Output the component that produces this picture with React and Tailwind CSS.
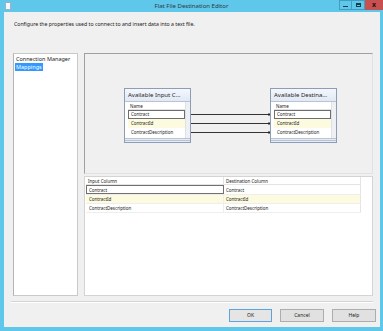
import React from "react";

const font = { fontFamily: '"Noto Sans", "Liberation Sans", sans-serif' };

function Node({ title, pos }) {
  return (
    <div className={`absolute top-[34px] ${pos} w-[67px] h-[55px] border border-[#8d9db5] bg-[#e6ecf5] flex flex-col`}>
      <div className="h-[13px] bg-gradient-to-b from-[#f4f7fc] to-[#e2e9f5] border-b border-[#b8c3d4] px-[3px] text-[6px] leading-[13px] text-[#1e1e1e] whitespace-nowrap overflow-hidden">
        {title}
      </div>
      <div className="flex pl-[3px] bg-white">
        <div className="w-[57px] h-[36px] flex flex-col bg-white">
          <div className="h-[8px] border-b border-[#e2e2e2] pl-[2px] text-[4.5px] leading-[8px] text-[#222]">Name</div>
          <div className="h-[9px] border border-[#6e6e6e] pl-[2px] text-[4.5px] leading-[7px] text-[#222]">Contract</div>
          <div className="h-[9px] bg-[#fdfbdf] pl-[3px] text-[4.5px] leading-[9px] text-[#222]">ContractId</div>
          <div className="h-[9px] pl-[3px] text-[4.5px] leading-[9px] text-[#222]">ContractDescription</div>
        </div>
        <div className="flex-1 bg-[#eef0f4] border-l border-[#dde1e8]" />
      </div>
      <div className="flex-1 border-t border-[#b8c3d4] bg-[#e6ecf5] flex flex-col justify-end">
        <div className="h-[2px] border-t border-[#b8c3d4]" />
      </div>
    </div>
  );
}

export default function App() {
  return (
    <div className="w-[383px] h-[331px] bg-[#5fc7ea] flex flex-col overflow-hidden" style={font}>
      {/* title bar */}
      <div className="h-[12px] flex items-start relative">
        <div className="absolute left-[5px] top-[2px] w-[6px] h-[8px] bg-[#f4f8fc] border border-[#9fb3c8]" />
        <div className="flex-1 text-center text-[6px] leading-[12px] text-[#2a3a44]">Flat File Destination Editor</div>
        <div className="absolute right-0 top-0 flex">
          <div className="w-[13px] h-[10px] border border-[#3f9ec2] bg-[#5fc7ea] flex items-center justify-center">
            <div className="w-[5px] h-[1px] bg-[#1c3a48] mt-[2px]" />
          </div>
          <div className="w-[13px] h-[10px] border border-l-0 border-[#3f9ec2] bg-[#5fc7ea] flex items-center justify-center">
            <div className="w-[5px] h-[4px] border border-t-2 border-[#1c3a48]" />
          </div>
          <div className="w-[18px] h-[10px] bg-[#c75050] flex items-center justify-center text-[7px] leading-[10px] font-bold text-[#2a1010]">x</div>
        </div>
      </div>
      {/* client */}
      <div className="ml-[4px] mr-[3px] mb-[4px] flex-1 bg-[#f0f0f0] flex flex-col">
        <div className="h-[41px] pl-[10px] pt-[9px] text-[5.2px] leading-[7px] text-[#222]">
          Configure the properties used to connect to and insert data into a text file.
        </div>
        <div className="h-[243px] flex pl-[9px] gap-[6px]">
          {/* left list */}
          <div className="w-[65px] h-full bg-white border border-[#c9c9c9] border-l-[#b4b4b4] pt-[1px] pl-[1px] flex flex-col items-start">
            <div className="text-[5.5px] leading-[8px] h-[8px] text-[#222] pl-[1px]">Connection Manager</div>
            <div className="bg-[#3399ff] text-white text-[5.5px] leading-[8px] h-[8px] px-[1px]">Mappings</div>
          </div>
          {/* right */}
          <div className="w-[289px] h-full flex flex-col gap-[2px]">
            <div className="h-[121px] relative bg-[#f0f0f0] border border-[#e2e2e2] border-t-[#a0a0a0] border-l-[#a0a0a0]">
              <svg className="absolute left-0 top-0" width="287" height="119">
                {[60, 69, 78].map((y) => (
                  <g key={y}>
                    <line x1="106" y1={y + 0.5} x2="184" y2={y + 0.5} stroke="#333" strokeWidth="1" />
                    <rect x="183" y={y - 0.5} width="2" height="2" fill="#222" />
                  </g>
                ))}
              </svg>
              <Node title="Available Input C..." pos="left-[39px]" />
              <Node title="Available Destina..." pos="left-[185px]" />
            </div>
            <div className="h-[120px] bg-white border border-[#d4d4d4] pl-[1px]">
              <div className="w-[275px] flex flex-col text-[4.5px] text-[#222]">
                <div className="h-[8px] flex border-b border-[#e4e4e4]">
                  <div className="w-[138px] border-r border-[#e4e4e4] pl-[2px] leading-[8px]">Input Column</div>
                  <div className="flex-1 pl-[2px] leading-[8px] border-r border-[#e4e4e4]">Destination Column</div>
                </div>
                <div className="h-[10px] flex border-b border-[#eeeeee]">
                  <div className="w-[138px] border border-[#707070] pl-[2px] leading-[8px]">Contract</div>
                  <div className="flex-1 pl-[2px] leading-[10px] border-r border-[#e4e4e4]">Contract</div>
                </div>
                <div className="h-[9px] flex bg-[#fdfbdf] border-b border-[#eeeeee]">
                  <div className="w-[138px] border-r border-[#eeeeee] pl-[3px] leading-[9px]">ContractId</div>
                  <div className="flex-1 pl-[2px] leading-[9px] border-r border-[#e4e4e4]">ContractId</div>
                </div>
                <div className="h-[9px] flex border-b border-[#eeeeee]">
                  <div className="w-[138px] border-r border-[#eeeeee] pl-[3px] leading-[9px]">ContractDescription</div>
                  <div className="flex-1 pl-[2px] leading-[9px] border-r border-[#e4e4e4]">ContractDescription</div>
                </div>
              </div>
            </div>
          </div>
        </div>
        {/* separator */}
        <div className="mt-[5px] mx-[7px] h-[2px] border-t border-[#d5d5d5] border-b border-b-white" />
        {/* buttons */}
        <div className="mt-[6px] flex justify-end gap-[8px] pr-[4px]">
          <div className="w-[43px] h-[13px] border border-[#5fa3dc] bg-[#e5e5e5] text-[5px] leading-[11px] text-center text-[#222]">OK</div>
          <div className="w-[44px] h-[13px] border border-[#adadad] bg-[#e1e1e1] text-[5px] leading-[11px] text-center text-[#222]">Cancel</div>
          <div className="w-[44px] h-[13px] border border-[#adadad] bg-[#e1e1e1] text-[5px] leading-[11px] text-center text-[#222]">Help</div>
        </div>
      </div>
    </div>
  );
}
